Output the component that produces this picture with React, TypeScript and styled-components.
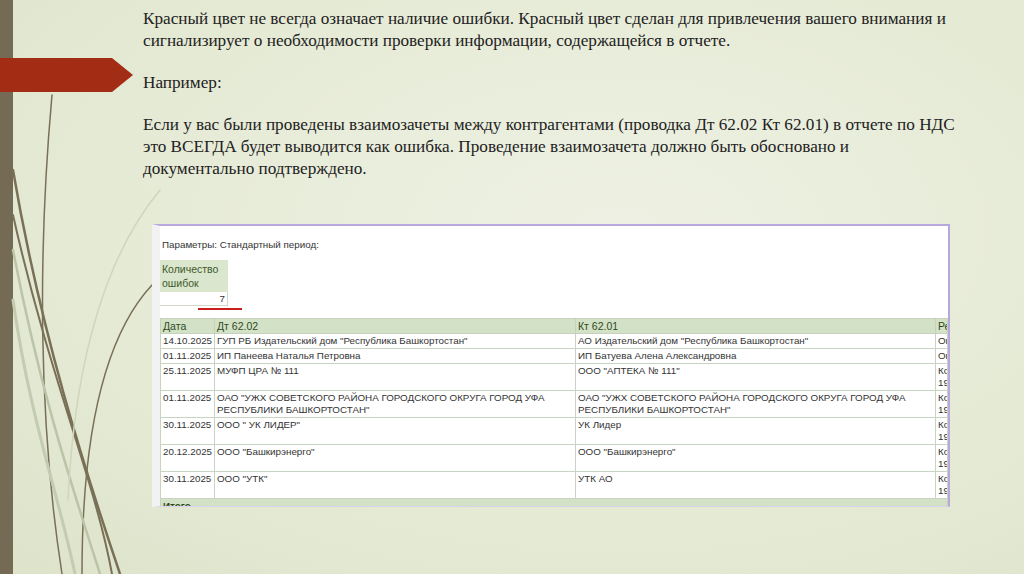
import styled, { createGlobalStyle } from 'styled-components';

const Global = createGlobalStyle`
  html, body { margin: 0; padding: 0; }
  body { width: 1024px; height: 574px; overflow: hidden; }
`;

const rows = [
  ['14.10.2025', 'ГУП РБ Издательский дом "Республика Башкортостан"', ' АО Издательский дом "Республика Башкортостан"', ['Оп'], 1],
  ['01.11.2025', 'ИП Панеева Наталья Петровна', 'ИП Батуева Алена Александровна', ['Оп'], 1],
  ['25.11.2025', 'МУФП ЦРА № 111', 'ООО "АПТЕКА № 111"', ['Кор', '19:'], 2],
  ['01.11.2025', 'ОАО "УЖХ СОВЕТСКОГО РАЙОНА ГОРОДСКОГО ОКРУГА ГОРОД УФА РЕСПУБЛИКИ БАШКОРТОСТАН"', 'ОАО "УЖХ СОВЕТСКОГО РАЙОНА ГОРОДСКОГО ОКРУГА ГОРОД УФА РЕСПУБЛИКИ БАШКОРТОСТАН"', ['Кор', '19:'], 2],
  ['30.11.2025', 'ООО " УК ЛИДЕР"', 'УК Лидер', ['Кор', '19:'], 2],
  ['20.12.2025', 'ООО "Башкирэнерго"', 'ООО "Башкирэнерго"', ['Кор', '19:'], 2],
  ['30.11.2025', 'ООО "УТК"', 'УТК АО', ['Кор', '19:'], 2],
] as const;

const App = () => (
  <Slide>
    <Global />
    <SideBar />
    <Curves viewBox="0 0 1024 574" preserveAspectRatio="none">
      <g fill="none" strokeLinecap="round">
        <path d="M52 95 C38 250 38 420 62 574" stroke="#7a6f57" strokeWidth="1.5" />
        <path d="M13 170 C40 330 85 470 120 574" stroke="#7a6f57" strokeWidth="2.5" />
        <path d="M13 215 C50 380 95 480 112 574" stroke="#7a6f57" strokeWidth="2" />
        <path d="M152 285 C110 330 82 420 82 574" stroke="#7a6f57" strokeWidth="1.5" />
        <path d="M13 250 C40 390 70 480 100 574" stroke="#bcc4a8" strokeWidth="2.5" />
        <path d="M160 190 C110 250 75 350 68 500" stroke="#cfd6bd" strokeWidth="1.5" />
        <path d="M13 300 C30 420 60 500 75 574" stroke="#c3cbb0" strokeWidth="3" />
      </g>
    </Curves>
    <Arrow />
    <Content>
      <Para>
        Красный цвет не всегда означает наличие ошибки. Красный цвет сделан для привлечения вашего внимания и
        сигнализирует о необходимости проверки информации, содержащейся в отчете.
      </Para>
      <Para>Например:</Para>
      <Para>
        Если у вас были проведены взаимозачеты между контрагентами (проводка Дт 62.02 Кт 62.01) в отчете по НДС
        это ВСЕГДА будет выводится как ошибка. Проведение взаимозачета должно быть обосновано и
        документально подтверждено.
      </Para>
    </Content>
    <Report>
      <Params>Параметры: Стандартный период:</Params>
      <CountBox>
        <CountHead>Количество<br />ошибок</CountHead>
        <CountVal>7</CountVal>
        <RedLine />
      </CountBox>
      <Table>
        <colgroup>
          <col style={{ width: 54 }} />
          <col style={{ width: 361 }} />
          <col style={{ width: 360 }} />
          <col />
        </colgroup>
        <thead>
          <tr>
            <Th>Дата</Th><Th>Дт 62.02</Th><Th>Кт 62.01</Th><Th>Ре</Th>
          </tr>
        </thead>
        <tbody>
          {rows.map((r, i) => (
            <tr key={i}>
              <Td $lines={r[4]}>{r[0]}</Td>
              <Td $lines={r[4]}>{r[1]}</Td>
              <Td $lines={r[4]}>{r[2]}</Td>
              <Td $lines={r[4]}>{r[3].map((t) => <div key={t}>{t}</div>)}</Td>
            </tr>
          ))}
          <tr>
            <Total colSpan={4}>Итого</Total>
          </tr>
        </tbody>
      </Table>
    </Report>
  </Slide>
);

const Slide = styled.div`
  position: relative;
  width: 1024px;
  height: 574px;
  overflow: hidden;
  background: radial-gradient(ellipse at 60% 40%, #eef1e3 0%, #e5ead5 60%, #dde4ca 100%);
  font-family: 'Liberation Serif', serif;
`;

const SideBar = styled.div`
  position: absolute;
  left: 0;
  top: 0;
  width: 13px;
  height: 100%;
  background: #756b55;
`;

const Curves = styled.svg`
  position: absolute;
  inset: 0;
  width: 100%;
  height: 100%;
`;

const Arrow = styled.div`
  position: absolute;
  left: 0;
  top: 58px;
  width: 133px;
  height: 34px;
  background: #a32d14;
  clip-path: polygon(0 0, 112px 0, 133px 50%, 112px 100%, 0 100%);
`;

const Content = styled.div`
  position: relative;
  width: 820px;
  padding: 8px 0 0 143px;
  color: #222;
  font-size: 17.2px;
  line-height: 22px;
`;

const Para = styled.p`
  margin: 0 0 20px;
`;

const Report = styled.div`
  position: absolute;
  left: 152px;
  top: 224px;
  width: 798px;
  height: 283px;
  background: #fff;
  border-top: 2px solid #b9a8e0;
  border-right: 2px solid #b9a8e0;
  border-bottom: 1px solid #d8d2ea;
  border-left: 8px solid #f2f2f2;
  box-sizing: border-box;
  font-family: 'Liberation Sans', Arial, sans-serif;
  font-size: 9.8px;
  color: #333;
  overflow: hidden;
`;

const Params = styled.div`
  padding: 13px 0 0 2px;
  height: 21px;
`;

const CountBox = styled.div`
  position: relative;
  width: 68px;
  margin-bottom: 12px;
`;

const CountHead = styled.div`
  background: #dbe6cf;
  color: #3d5a2a;
  padding: 2px 2px;
  font-size: 10.5px;
  line-height: 14px;
`;

const CountVal = styled.div`
  text-align: right;
  padding: 1px 2px;
  border-bottom: 1px solid #d0d8c8;
  border-right: 1px solid #d0d8c8;
`;

const RedLine = styled.div`
  position: absolute;
  left: 38px;
  bottom: -4px;
  width: 44px;
  height: 2px;
  background: #c8201a;
`;

const Table = styled.table`
  width: 100%;
  border-collapse: collapse;
  table-layout: fixed;
`;

const Th = styled.th`
  background: #d3e2c6;
  color: #2f4a1e;
  font-weight: normal;
  text-align: left;
  padding: 1px 2px;
  font-size: 10.5px;
  border: 1px solid #c6d2bc;
  white-space: nowrap;
  overflow: hidden;
`;

const Td = styled.td<{ $lines: number }>`
  vertical-align: top;
  padding: 1px 2px;
  height: ${(p) => (p.$lines === 2 ? 24 : 11)}px;
  line-height: 12px;
  border: 1px solid #c9d3c2;
  white-space: ${(p) => (p.$lines === 2 ? 'normal' : 'nowrap')};
  overflow: hidden;
`;

const Total = styled.td`
  background: #d3e2c6;
  color: #2f4a1e;
  font-weight: bold;
  padding: 1px 2px;
  border: 1px solid #c6d2bc;
  border-bottom: 2px solid #a8b69d;
`;

export default App;
